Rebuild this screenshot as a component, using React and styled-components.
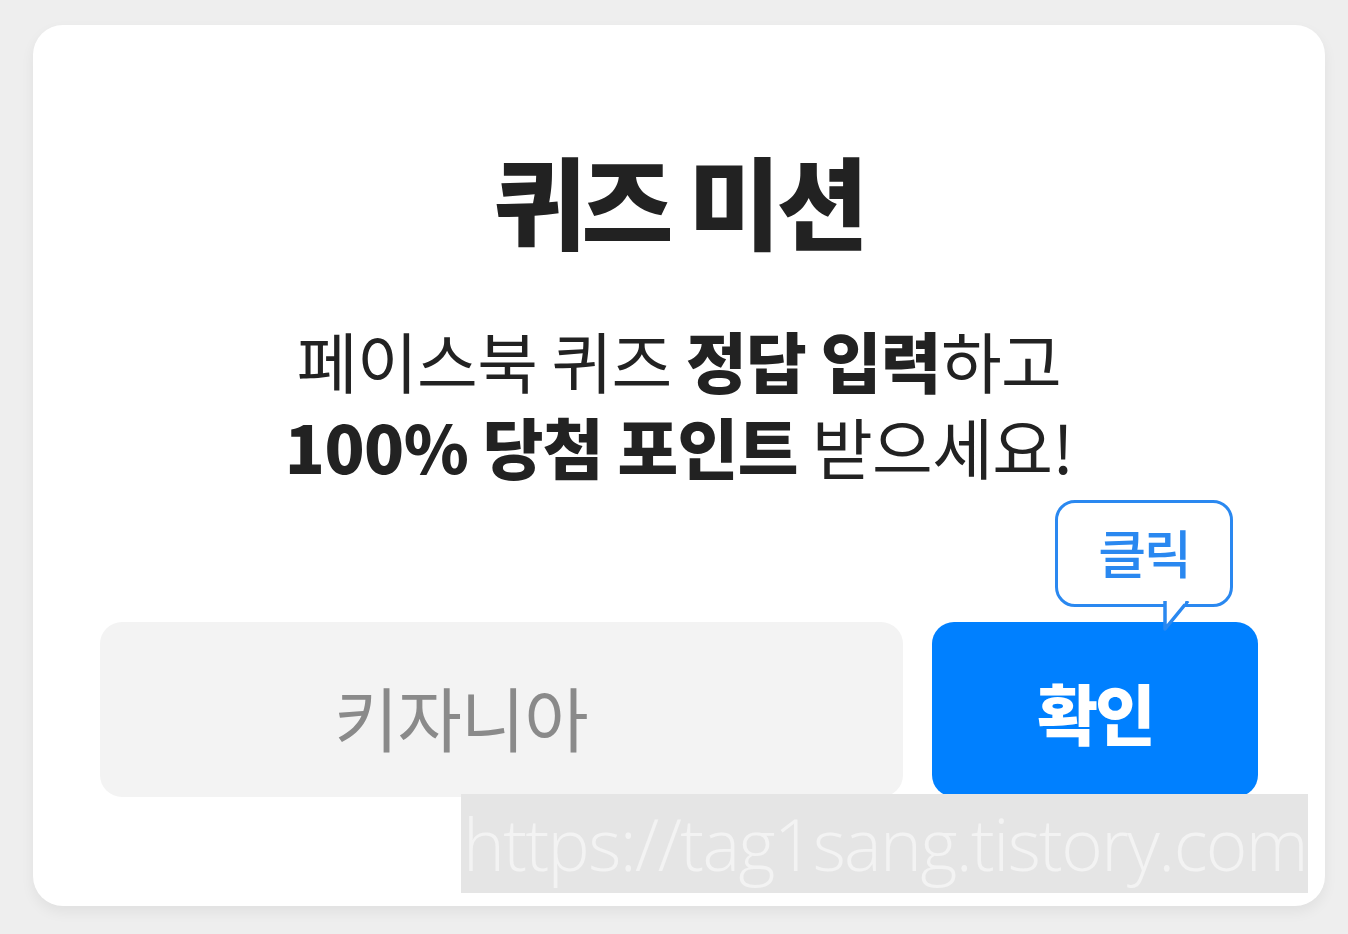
import styled, { createGlobalStyle } from "styled-components";

const GlobalStyle = createGlobalStyle`
  html, body {
    margin: 0;
    padding: 0;
    background: #eeeeee;
    font-family: "Noto Sans CJK KR", "Noto Sans", sans-serif;
  }
`;

const Page = styled.div`
  width: 1348px;
  height: 934px;
  position: relative;
  padding: 25px 23px 0 33px;
  box-sizing: border-box;
  overflow: hidden;
`;

const Card = styled.div`
  width: 1292px;
  height: 881px;
  box-sizing: border-box;
  background: #ffffff;
  border-radius: 30px;
  box-shadow: 0 6px 14px rgba(0, 0, 0, 0.06);
  padding: 124px 67px 0 67px;
  display: flex;
  flex-direction: column;
  align-items: center;
`;

const Title = styled.h1`
  margin: 0;
  font-size: 100px;
  font-weight: 900;
  line-height: 1;
  letter-spacing: -4px;
  color: #222222;
`;

const Desc = styled.p`
  margin: 67px 0 0;
  font-size: 66px;
  line-height: 86px;
  letter-spacing: -0.6px;
  color: #222222;
  font-weight: 400;
  text-align: center;
  b {
    font-weight: 900;
  }
`;

const Row = styled.div`
  margin-top: 134px;
  align-self: stretch;
  display: flex;
  gap: 29px;
  height: 175px;
`;

const Input = styled.div`
  flex: 1;
  background: #f3f3f3;
  border-radius: 22px;
  display: flex;
  align-items: center;
  padding-left: 234px;
  padding-top: 14px;
  font-size: 70px;
  color: #8a8a8a;
  font-weight: 400;
  letter-spacing: -1px;
`;

const ButtonWrap = styled.div`
  position: relative;
  width: 326px;
`;

const Button = styled.button`
  width: 100%;
  height: 100%;
  border: none;
  border-radius: 22px;
  background: #0080ff;
  color: #ffffff;
  font-family: inherit;
  font-size: 66px;
  font-weight: 900;
  letter-spacing: -3px;
  padding-top: 4px;
`;

const Bubble = styled.div`
  position: absolute;
  left: 123px;
  top: -122px;
  width: 178px;
  height: 107px;
  box-sizing: border-box;
  border: 3px solid #2a88f0;
  border-radius: 20px;
  background: #ffffff;
  color: #2a88f0;
  font-size: 52px;
  font-weight: 500;
  display: flex;
  align-items: center;
  justify-content: center;
  letter-spacing: -2px;
  padding-bottom: 4px;
  svg {
    position: absolute;
    left: 105px;
    bottom: -27px;
  }
`;

const Watermark = styled.div`
  position: absolute;
  left: 461px;
  top: 794px;
  width: 847px;
  height: 99px;
  background: #e5e5e5;
  color: #f3f3f3;
  font-family: "Open Sans", "Noto Sans", sans-serif;
  font-weight: 300;
  font-size: 71px;
  letter-spacing: -1.6px;
  line-height: 99px;
  white-space: nowrap;
  overflow: hidden;
  padding-left: 2px;
  box-sizing: border-box;
`;

const App = () => {
  return (
    <Page>
      <GlobalStyle />
      <Card>
        <Title>퀴즈 미션</Title>
        <Desc>
          페이스북 퀴즈 <b>정답 입력</b>하고
          <br />
          <b>100% 당첨 포인트</b> 받으세요!
        </Desc>
        <Row>
          <Input>키자니아</Input>
          <ButtonWrap>
            <Bubble>
              클릭
              <svg width="30" height="30" viewBox="0 0 30 30">
                <path d="M2 0 L2 28 L25 0" fill="#ffffff" />
                <path d="M2 0 L2 28 L25 0" fill="none" stroke="#2a88f0" strokeWidth="3.5" strokeLinejoin="round" />
                <rect x="4" y="-2" width="18" height="4.5" fill="#ffffff" />
              </svg>
            </Bubble>
            <Button>확인</Button>
          </ButtonWrap>
        </Row>
      </Card>
      <Watermark>https://tag1sang.tistory.com</Watermark>
    </Page>
  );
};

export default App;
